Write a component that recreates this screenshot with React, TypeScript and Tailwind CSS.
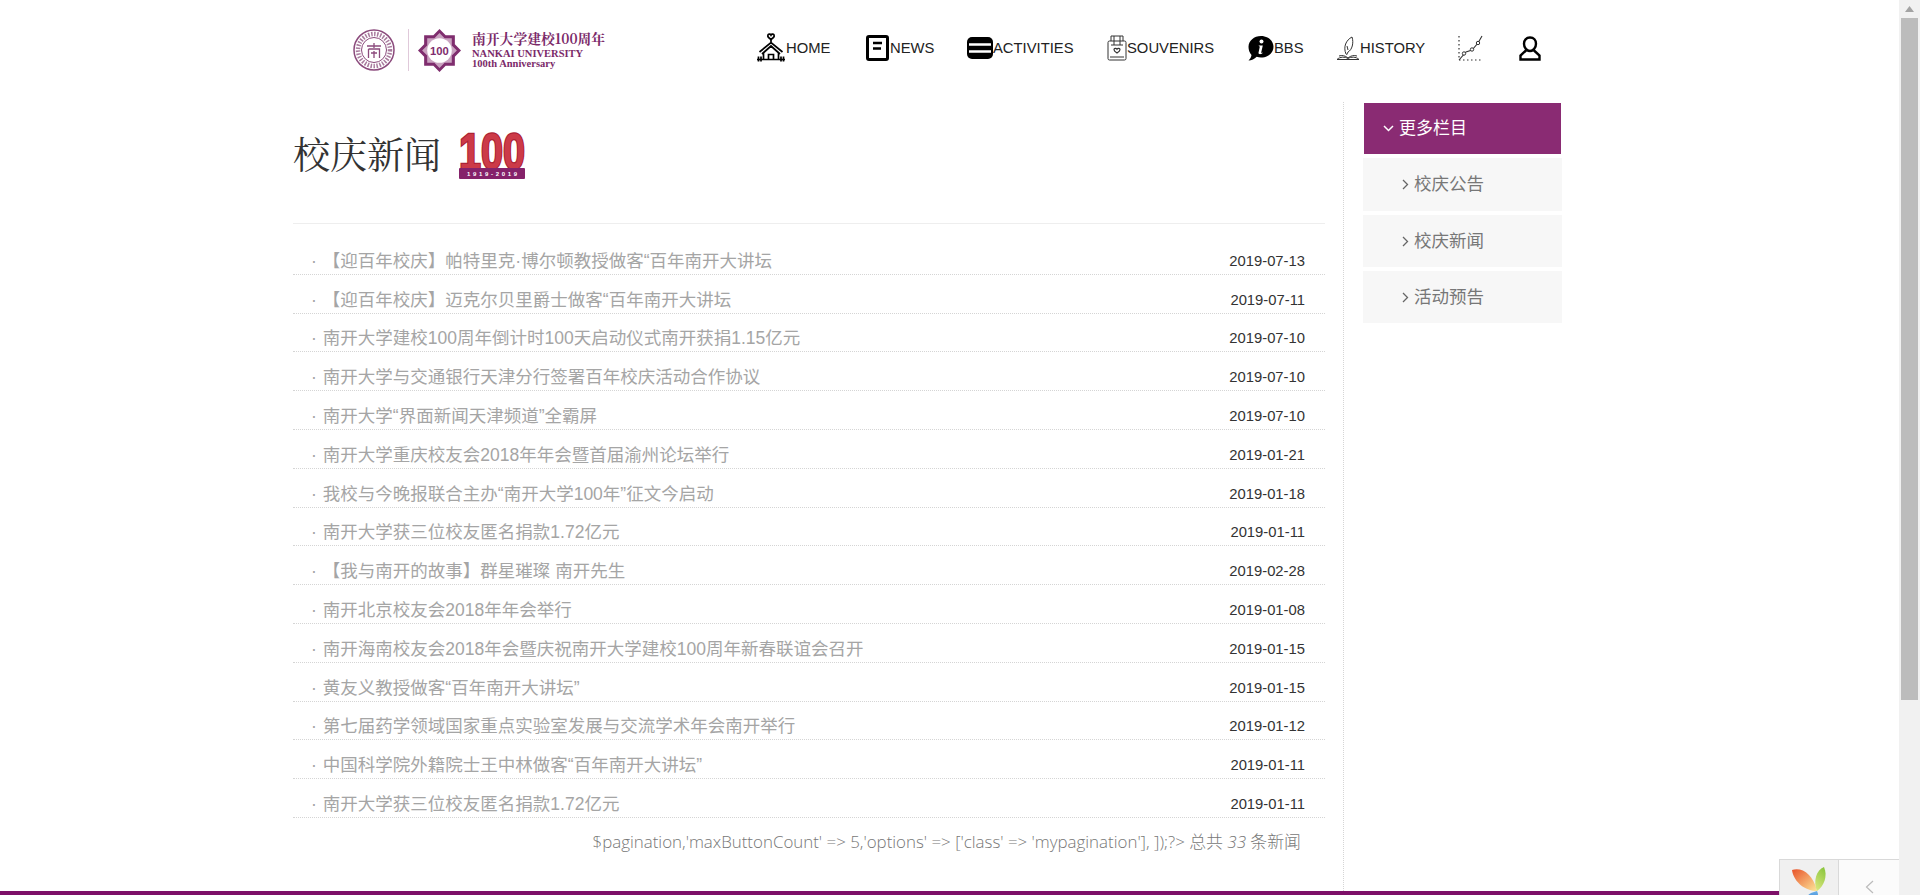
import type { JSX } from "react";

const rows: [string, string][] = [
  ["【迎百年校庆】帕特里克·博尔顿教授做客“百年南开大讲坛", "2019-07-13"],
  ["【迎百年校庆】迈克尔贝里爵士做客“百年南开大讲坛", "2019-07-11"],
  ["南开大学建校100周年倒计时100天启动仪式南开获捐1.15亿元", "2019-07-10"],
  ["南开大学与交通银行天津分行签署百年校庆活动合作协议", "2019-07-10"],
  ["南开大学“界面新闻天津频道”全霸屏", "2019-07-10"],
  ["南开大学重庆校友会2018年年会暨首届渝州论坛举行", "2019-01-21"],
  ["我校与今晚报联合主办“南开大学100年”征文今启动", "2019-01-18"],
  ["南开大学获三位校友匿名捐款1.72亿元", "2019-01-11"],
  ["【我与南开的故事】群星璀璨 南开先生", "2019-02-28"],
  ["南开北京校友会2018年年会举行", "2019-01-08"],
  ["南开海南校友会2018年会暨庆祝南开大学建校100周年新春联谊会召开", "2019-01-15"],
  ["黄友义教授做客“百年南开大讲坛”", "2019-01-15"],
  ["第七届药学领域国家重点实验室发展与交流学术年会南开举行", "2019-01-12"],
  ["中国科学院外籍院士王中林做客“百年南开大讲坛”", "2019-01-11"],
  ["南开大学获三位校友匿名捐款1.72亿元", "2019-01-11"],
];
const font = "font-['Liberation_Sans','Noto_Sans_CJK_SC',sans-serif]";

function Logo() {
  return (
    <div className="flex items-center w-[255px] h-[44px] mt-[28px] shrink-0">
      <svg width="42" height="42" viewBox="0 0 42 42" className="shrink-0">
        <circle cx="21" cy="21" r="20" fill="none" stroke="#8b4a7c" strokeWidth="1.500" />
        <circle cx="21" cy="21" r="12.500" fill="none" stroke="#8b4a7c" strokeWidth="1" />
        <circle cx="21" cy="21" r="16" fill="none" stroke="#a87a9d" strokeWidth="4.500" strokeDasharray="1.500 1.500" />
        <path d="M14 17h14M21 14v5M15.500 20h11v9M15.500 20v9M18 24h6M21 22v7" stroke="#8b4a7c" strokeWidth="1.300" fill="none" />
      </svg>
      <div className="w-px h-[42px] bg-[#e0c9da] ml-[13px] mr-[9px] shrink-0" />
      <svg width="43" height="43" viewBox="0 0 42 42" className="shrink-0">
        <path d="M21 0l6 6h9v9l6 6-6 6v9h-9l-6 6-6-6H6v-9l-6-6 6-6V6h9z" fill="#7f2d6e" />
        <path d="M21 4l5 5h7v7l5 5-5 5v7h-7l-5 5-5-5H9v-7l-5-5 5-5V9h7z" fill="#c9a3c0" />
        <circle cx="21" cy="21" r="12" fill="#fff" />
        <text x="21" y="25" textAnchor="middle" fontSize="11" fontWeight="700" fill="#7f2d6e" fontFamily="Liberation Sans">100</text>
      </svg>
      <div className="ml-[11px] flex flex-col text-[#7b2a69] font-['Liberation_Serif',serif] font-bold leading-none">
        <span className="text-[13.800px] leading-[15px] whitespace-nowrap mb-[3px] font-['Noto_Serif_CJK_SC','Liberation_Serif',serif]">南开大学建校100周年</span>
        <span className="text-[10.500px] leading-[10px] whitespace-nowrap">NANKAI UNIVERSITY</span>
        <span className="text-[10.500px] leading-[10px] whitespace-nowrap">100th Anniversary</span>
      </div>
    </div>
  );
}

const HomeIcon = () => (
  <svg width="30" height="30" viewBox="0 0 30 30" fill="none" stroke="#000" strokeWidth="1.700">
    <path d="M15 6.500c-2-1.500-3.200-2.400-3.200-3.600 0-2 2.400-2.400 3.200-.8.800-1.600 3.200-1.200 3.200.8 0 1.200-1.200 2.100-3.200 3.600z" />
    <path d="M15 7v2M3.500 19L15 9.500 26.500 19M6 21L15 13l9 8M7.500 20v6.500h15V20M12.500 26.500v-5h5v5M1 26.500h28M2.500 23.500v5M5 23.500v5M25 23.500v5M27.500 23.500v5" />
  </svg>
);
const NewsIcon = () => (
  <svg width="24" height="26" viewBox="0 0 24 26">
    <rect x="1.500" y="1.500" width="20" height="23" rx="1.500" fill="#fff" stroke="#000" strokeWidth="3" />
    <path d="M7 8h9M7 13.500h8" stroke="#000" strokeWidth="2.500" />
  </svg>
);
const ListIcon = () => (
  <svg width="26" height="22" viewBox="0 0 26 22">
    <rect x="0" y="0" width="26" height="22" rx="5" fill="#000" />
    <path d="M2 7.500h22M2 14.500h22" stroke="#fff" strokeWidth="2.600" />
  </svg>
);
const BagIcon = () => (
  <svg width="20" height="26" viewBox="0 0 20 26" fill="none" stroke="#333" strokeWidth="1">
    <rect x="1" y="6" width="18" height="19" rx="1.500" />
    <path d="M4 6V1h12v5M7 1v9M13 1v9M4 10h12" />
    <path d="M10 18c-2-1.400-3-2.300-3-3.300 0-1.500 2.200-1.800 3-.5.800-1.300 3-1 3 .5 0 1-1 1.900-3 3.300z" strokeWidth="1.200" />
    <path d="M3 22h14" />
  </svg>
);
const InfoIcon = () => (
  <svg width="26" height="25" viewBox="0 0 26 25">
    <path d="M13 0c7 0 12.500 4.800 12.500 10.800S20 21.500 13 21.500c-1.500 0-3-.2-4.300-.7C6.500 23 3.500 24.500.5 24.500c1.700-1.500 2.700-3.300 3-5.500C1.500 17 .5 14 .5 10.800.5 4.800 6 0 13 0z" fill="#000" />
    <circle cx="13.500" cy="5.500" r="2" fill="#fff" />
    <path d="M10.500 9.500h4.300l-1.600 7c0 .5.700.5 1.600 0-.6 1.800-4.500 2.500-4.300.2l1.300-6z" fill="#fff" />
  </svg>
);
const QuillIcon = () => (
  <svg width="24" height="25" viewBox="0 0 24 25" fill="none" stroke="#333" strokeWidth="1">
    <path d="M10 18C7 11 10 4 16 1c2 6 0 13-4 15l-1.500 3M11 10l1 4" />
    <path d="M1 23.500c3-3 8-2.800 11-1 3-1.800 8-2 11 1M3 20c3-1 6-.5 9 2 3-2.500 6-3 9-2M1 23.500h22" />
  </svg>
);
const ChartIcon = () => (
  <svg width="26" height="26" viewBox="0 0 26 26" fill="none" stroke="#333">
    <path d="M1 1v24h24" strokeDasharray="1.500 2.500" strokeWidth="1.200" />
    <path d="M1 25L8 17l6-2 6-7 4-7" strokeWidth="1.100" />
    <circle cx="6" cy="18.500" r="1.700" fill="#fff" />
    <circle cx="14" cy="14.500" r="1.700" fill="#fff" />
    <circle cx="20" cy="8" r="1.700" fill="#fff" />
  </svg>
);
const UserIcon = () => (
  <svg width="22" height="25" viewBox="0 0 22 25" fill="none" stroke="#000" strokeWidth="2.400">
    <path d="M11 1.500c3.800 0 6 2.800 6 6.200 0 3.800-2.700 7.300-6 7.300s-6-3.500-6-7.300c0-3.400 2.200-6.200 6-6.200z" />
    <path d="M7.500 14L1.500 19.500v4h19v-4L14.500 14" />
  </svg>
);

const nav: { icon: JSX.Element; label: string; w: string }[] = [
  { icon: <HomeIcon />, label: "HOME", w: "w-[110px]" },
  { icon: <NewsIcon />, label: "NEWS", w: "w-[101px]" },
  { icon: <ListIcon />, label: "ACTIVITIES", w: "w-[140px]" },
  { icon: <BagIcon />, label: "SOUVENIRS", w: "w-[141px]" },
  { icon: <InfoIcon />, label: "BBS", w: "w-[88px]" },
  { icon: <QuillIcon />, label: "HISTORY", w: "w-[122px]" },
];

function Yii() {
  return (
    <svg width="36" height="36" viewBox="0 0 36 36">
      <defs>
        <linearGradient id="o" x1="0" y1="0" x2="1" y2="1"><stop offset="0" stopColor="#e8532a" /><stop offset="1" stopColor="#fde79a" /></linearGradient>
        <linearGradient id="g" x1="0.700" y1="0" x2="0.300" y2="1"><stop offset="0" stopColor="#8cc63f" /><stop offset="1" stopColor="#d8e67c" /></linearGradient>
        <linearGradient id="b" x1="0.500" y1="0" x2="0.500" y2="1"><stop offset="0" stopColor="#6ab0e8" /><stop offset="1" stopColor="#3a7fd0" /></linearGradient>
      </defs>
      <path d="M0 3c10-3 21 4 25 21C14 24 2 16 0 3z" fill="url(#o)" />
      <path d="M32 0c4 9 0 19-7 24C21 15 24 3 32 0z" fill="url(#g)" />
      <path d="M19 26l6-2c2 4 1 8-2 12H14c-1-4 1-8 5-10z" fill="url(#b)" />
    </svg>
  );
}

export default function App() {
  return (
    <div className={`flex h-[895px] w-full overflow-hidden bg-white ${font}`}>
      <div className="relative flex-1 flex flex-col min-w-0">
        <header className="h-[88px] shrink-0 flex items-start pl-[353px]">
          <Logo />
          <nav className="flex items-center ml-[148px] mt-[33px] text-[14.800px] text-[#222]">
            {nav.map((n) => (
              <div key={n.label} className={`flex items-center ${n.w} shrink-0`}>
                {n.icon}
                <span className="whitespace-nowrap">{n.label}</span>
              </div>
            ))}
            <div className="w-[61px] shrink-0"><ChartIcon /></div>
            <UserIcon />
          </nav>
        </header>
        <main className="flex flex-1 min-h-0 pl-[293px]">
          <section className="w-[1032px] shrink-0">
            <div className="h-[136px] border-b border-[#eeeeee] flex items-start pt-[33px]">
              <h1 className="text-[37px] leading-[64px] text-[#333] font-['Noto_Serif_CJK_SC','Liberation_Serif',serif]">校庆新闻</h1>
              <svg width="68" height="47" viewBox="0 0 68 47" className="ml-[17px] mt-[11px] overflow-visible">
                <text x="34" y="37" textAnchor="middle" fontSize="50" fontWeight="700" fill="#cc3a48" stroke="#ab2334" strokeWidth="2.500" paintOrder="stroke" fontFamily="Liberation Sans" textLength="66" lengthAdjust="spacingAndGlyphs">100</text>
                <rect x="1" y="36" width="66" height="11" rx="1" fill="#85226a" />
                <text x="34" y="44" textAnchor="middle" fontSize="6" fill="#fff" fontFamily="Liberation Sans" fontWeight="700" textLength="50">1919-2019</text>
              </svg>
            </div>
            <ul className="pt-[12px]">
              {rows.map(([title, date], i) => (
                <li key={i} className="flex h-[38.800px] items-end justify-between border-b border-dotted border-[#d5d5d5] pb-[1px]">
                  <span className="pl-[18px] text-[17.500px] leading-[24px] text-[#a5a5a5] whitespace-nowrap [text-spacing-trim:space-all]">
                    <span className="mr-[6px]">·</span>{title}
                  </span>
                  <span className="text-[14.800px] leading-[24px] text-[#333] pr-[20px]">{date}</span>
                </li>
              ))}
            </ul>
            <div className="mt-[12px] pr-[24px] text-right text-[16.900px] leading-[24px] font-light text-[#777] font-['Open_Sans','Noto_Sans_CJK_SC',sans-serif] whitespace-nowrap">
              $pagination,'maxButtonCount' =&gt; 5,'options' =&gt; ['class' =&gt; 'mypagination'], ]);?&gt; 总共 <i>33</i> 条新闻
            </div>
          </section>
          <div className="w-px ml-[18px] border-l border-dotted border-[#d5d5d5] mt-[14px] shrink-0" />
          <aside className="w-[199px] ml-[19px] shrink-0 pt-[15px] flex flex-col gap-[4px]">
            <div className="mx-px h-[51px] shrink-0 bg-[#8a2b73] text-white text-[17px] flex items-center pl-[19px] gap-[5px]">
              <svg width="11" height="7" viewBox="0 0 11 7" fill="none" stroke="#fff" strokeWidth="1.500"><path d="M1 1l4.500 4.500L10 1" /></svg>
              更多栏目
            </div>
            {["校庆公告", "校庆新闻", "活动预告"].map((t, i) => (
              <div key={t} className={`${i === 0 ? "h-[53px]" : "h-[52px]"} shrink-0 bg-[#f7f7f7] text-[#777] text-[17.500px] flex items-center pl-[39px] gap-[5px]`}>
                <svg width="7" height="11" viewBox="0 0 7 11" fill="none" stroke="#666" strokeWidth="1.300"><path d="M1 1l4.500 4.500L1 10" /></svg>
                {t}
              </div>
            ))}
          </aside>
        </main>
        <div className="h-[4px] bg-[#7d0f68] shrink-0" />
        <div className="absolute right-0 bottom-0 h-[36px] w-[120px] flex border-t border-l border-[#d9d9d9] bg-[#f7f7f7]">
          <div className="w-[59px] border-r border-[#d9d9d9] overflow-hidden pl-[12px] pt-[7px] bg-[#f0f0f0]"><Yii /></div>
          <div className="flex-1 flex justify-center pt-[20px] bg-[#fbfbfb]">
            <svg width="9" height="14" viewBox="0 0 9 14" fill="none" stroke="#bbb" strokeWidth="1.200"><path d="M8 1L1.500 7 8 13" /></svg>
          </div>
        </div>
      </div>
      <div className="w-[21px] shrink-0 bg-[#f1f1f1] flex flex-col items-center">
        <div className="h-[18px] flex items-center justify-center">
          <svg width="9" height="6" viewBox="0 0 9 6"><path d="M4.500 0L9 6H0z" fill="#a3a3a3" /></svg>
        </div>
        <div className="h-[682px] w-[17px] bg-[#bcbcbc]" />
      </div>
    </div>
  );
}
